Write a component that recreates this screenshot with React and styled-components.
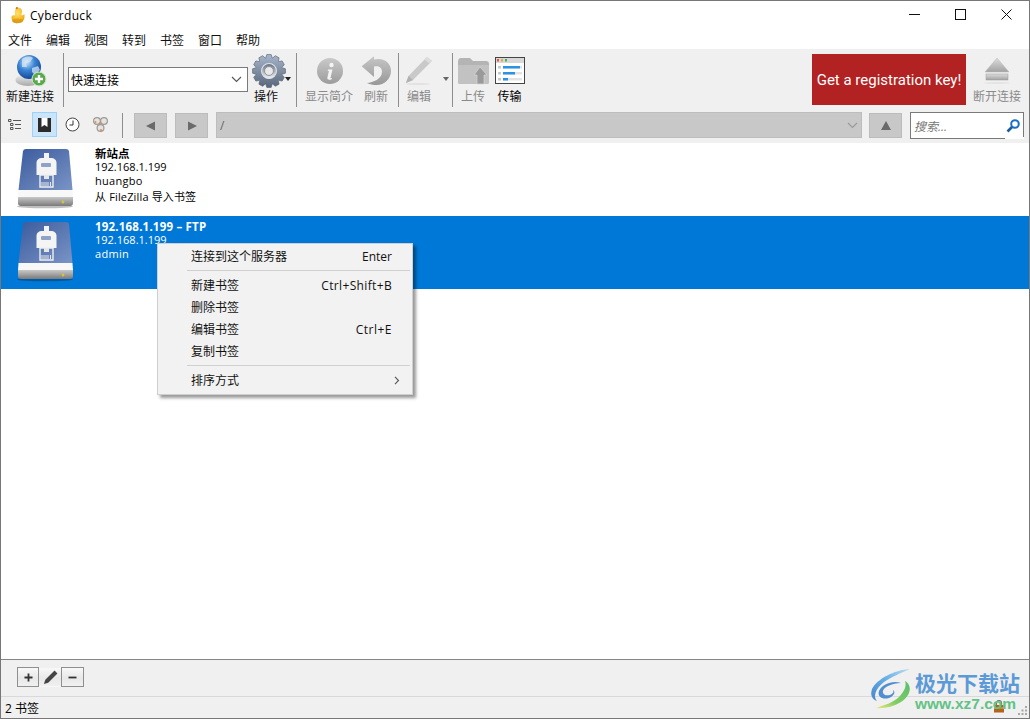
import React from 'react';
import styled, { createGlobalStyle } from 'styled-components';

const CJK = '"Noto Sans CJK SC"';
const Global = createGlobalStyle`
  html, body { margin: 0; padding: 0; background: #fff; }
  * { box-sizing: border-box; }
  body { font-family: "Open Sans", ${CJK}, sans-serif; font-size: 12px; color: #000; }
`;
const Window = styled.div`
  position: relative; width: 1030px; height: 719px; border: 1px solid #777; overflow: hidden;
  display: flex; flex-direction: column; background: #f0f0f0;
`;
const TitleBar = styled.div`
  height: 27px; flex: none; background: #fff; display: flex; align-items: center; padding-left: 9px;
`;
const TitleText = styled.span` font-size: 12px; letter-spacing: .3px; flex: 1; padding-top: 2px; margin-left: 4px; `;
const WinBtn = styled.div` width: 46px; height: 27px; display: flex; align-items: center; justify-content: center; `;
const MenuBar = styled.div` height: 21px; flex: none; background: #fff; display: flex; align-items: center; padding-top: 4px; `;
const MenuItem = styled.span` padding: 0 7px; font-size: 12px; line-height: 17px; color: #111; `;
const Toolbar = styled.div` height: 63px; flex: none; display: flex; align-items: flex-start; padding: 0 7px 0 4px; `;
const ToolBtn = styled.div`
  width: ${p => p.$w}px; margin-left: ${p => p.$ml || 0}px; height: 55px; margin-top: 3px; display: flex; flex-direction: column;
  align-items: center; justify-content: flex-start; font-size: 12px; color: ${p => p.$off ? '#8a8a8a' : '#111'}; flex: none; position: relative;
`;
const ToolIcon = styled.div` height: 37px; display: flex; align-items: center; justify-content: center; margin-left: ${p => p.$nudge || 0}px; `;
const ToolLabel = styled.span` line-height: 16px; white-space: nowrap; color: ${p => p.$strong ? '#000' : 'inherit'}; `;
const Divider = styled.div`
  width: 1px; height: ${p => p.$h || 54}px; background: #8e8e8e; margin-left: ${p => p.$ml || 0}px; margin-top: ${p => p.$mt ?? 4}px; flex: none;
`;
const QuickCombo = styled.div`
  width: 180px; height: 25px; margin: 18px 0 0 4px; background: #fff; border: 1px solid #7a7a7a; flex: none;
  display: flex; align-items: center; justify-content: space-between; padding: 0 5px 0 2px; font-size: 12px;
`;
const DropCaret = styled.div`
  position: absolute; right: ${p => p.$r}px; top: ${p => p.$t}px; width: 0; height: 0;
  border-left: 3.5px solid transparent; border-right: 3.5px solid transparent; border-top: 4px solid ${p => p.$c};
`;
const RegBanner = styled.div`
  width: 154px; height: 51px; margin: 5px 0 0 auto; background: #b22222; color: #fff; font: 15px Roboto, sans-serif; flex: none;
  display: flex; align-items: center; justify-content: center; white-space: nowrap;
`;
const NavBar = styled.div` height: 31px; flex: none; display: flex; align-items: flex-start; `;
const ViewBtn = styled.div`
  width: 25px; height: 25px; margin-left: ${p => p.$ml || 0}px; display: flex; align-items: center; justify-content: center; flex: none;
  background: ${p => p.$active ? '#cce4f7' : 'transparent'}; border: 1px solid ${p => p.$active ? '#99d1ff' : 'transparent'};
`;
const NavSquare = styled.div`
  width: 33px; height: 25px; margin-left: ${p => p.$ml}px; margin-top: 1px; flex: none; background: #c8c8c8; border: 1px solid #bcbcbc;
  display: flex; align-items: center; justify-content: center;
`;
const PathCombo = styled.div`
  width: 646px; height: 26px; margin-left: 8px; flex: none; background: #c8c8c8; border: 1px solid #bdbdbd;
  display: flex; align-items: center; justify-content: space-between; padding: 0 3px 0 3px; color: #666; font-size: 12px;
`;
const SearchBox = styled.div`
  width: 114px; height: 27px; margin-left: 8px; flex: none; background: #fff; border: 1px solid #7a7a7a;
  display: flex; align-items: center; justify-content: space-between; padding: 0 2px 0 3px; color: #777; font-style: italic; font-size: 12px; position: relative;
`;
const SearchNotch = styled.div` position: absolute; right: -1px; bottom: -1px; width: 19px; height: 2px; background: #fff; `;
const List = styled.div` flex: 1; background: #fff; display: flex; flex-direction: column; `;
const Row = styled.div`
  height: 73px; flex: none; display: flex; background: ${p => p.$sel ? '#0078d7' : '#fff'}; color: ${p => p.$sel ? '#fff' : '#000'};
  padding: 3px 0 0 15px;
`;
const RowText = styled.div` margin: 1px 0 0 19px; display: flex; flex-direction: column; font-size: 11px; `;
const RowLine = styled.div` line-height: ${p => p.$h || 14}px; white-space: nowrap; letter-spacing: ${p => p.$s || 0}px; `;
const RowTitle = styled.div` line-height: 13px; white-space: nowrap; font-weight: 700; font-size: 11.5px; letter-spacing: ${p => p.$s || 0}px; `;
const Footer = styled.div`
  height: 37px; flex: none; border-top: 1px solid #858585; display: flex; align-items: flex-start; padding: 7px 0 0 16px;
`;
const SmallBtn = styled.div`
  width: ${p => p.$w}px; height: 20px; background: linear-gradient(#f8f8f8, #e8e8e8 55%, #f0f0f0); border: 1px solid ${p => p.$plain ? 'transparent' : '#8f8f8f'};
  display: flex; align-items: center; justify-content: center; flex: none;
`;
const Status = styled.div`
  height: 22px; flex: none; border-top: 1px solid #d9d9d9; display: flex; align-items: center; padding-left: 4px; font-size: 12px; position: relative;
`;
const ContextMenu = styled.div`
  position: absolute; left: 156px; top: 242px; width: 256px; height: 152px; background: #f2f2f2; border: 1px solid #cfcfcf;
  box-shadow: 3px 3px 3px rgba(0,0,0,.4); padding: 1px; font-size: 12px; color: #111;
`;
const CtxItem = styled.div`
  height: 22px; display: flex; justify-content: space-between; align-items: center; padding: 0 19px 0 32px;
`;
const CtxKey = styled.span` letter-spacing: ${p => p.$s || 0}px; `;
const CtxArrow = styled.svg` margin-right: -8px; `;
const CtxSep = styled.div` height: 1px; background: #d0d0d0; margin: 3px 1px 3px 28px; `;
const Watermark = styled.div`
  position: absolute; left: 867px; top: 666px; display: flex; pointer-events: none;
`;
const WmText = styled.div` display: flex; flex-direction: column; margin-top: 2px; `;
const WmTitle = styled.div` font: 700 21px ${CJK}, sans-serif; line-height: 26px; color: #5b9ad6; `;
const WmUrl = styled.div` font: 700 15.5px "Liberation Sans", sans-serif; line-height: 18px; color: #63c285; `;
const StatusIcon = styled.div` position: absolute; right: ${p => p.$r}px; top: ${p => p.$t}px; display: flex; `;

const Duck = () => (
  <svg width="16" height="18" viewBox="0 0 16 18">
    <defs><radialGradient id="dk" cx=".45" cy=".35" r=".75"><stop offset="0" stopColor="#ffe06a" /><stop offset=".7" stopColor="#f5b51d" /><stop offset="1" stopColor="#c98a10" /></radialGradient></defs>
    <path d="M1.500 11c0-1.500 1.500-2 3.500-1.800L5 7.500C4.200 3.500 7 1.500 9 1.800c3 .4 3.800 3.400 2.600 6l-.3 1.400c1.300.4 2.100-.2 3-1.200.8 3.800-.2 9-6.600 9C3.500 18 1.500 14.500 1.500 11z" fill="url(#dk)" />
    <path d="M5.500 3.200L6.200 1 8 1.200 7.500 3z" fill="#d9781c" />
    <ellipse cx="7.500" cy="14.800" rx="5.500" ry="2.400" fill="#d6950f" opacity=".65" />
  </svg>
);
const Globe = () => (
  <svg width="46" height="36" viewBox="0 0 46 36">
    <defs>
      <radialGradient id="gl" cx=".4" cy=".3" r=".75"><stop offset="0" stopColor="#cfe6fa" /><stop offset=".45" stopColor="#3b85d4" /><stop offset="1" stopColor="#0f3f93" /></radialGradient>
      <linearGradient id="gd" x1="0" y1="0" x2="0" y2="1"><stop offset="0" stopColor="#f1f1f1" /><stop offset="1" stopColor="#a8a8a8" /></linearGradient>
    </defs>
    <ellipse cx="21" cy="27" rx="12.500" ry="6" fill="url(#gd)" />
    <circle cx="22" cy="14" r="12" fill="url(#gl)" />
    <path d="M15 6c4-3 8-3 11-1l-3 4-4 1 1 4-5 0zM25 15l6-2 2 4-5 5-3-3z" fill="#dbe9f6" opacity=".7" />
    <circle cx="32" cy="26" r="7" fill="#5aa94c" stroke="#d9ecd3" strokeWidth="1" />
    <path d="M32 22v8M28 26h8" stroke="#fff" strokeWidth="2.400" />
  </svg>
);
const gearPath = (() => {
  const n = 12, cx = 16, cy = 16; let d = '';
  for (let i = 0; i < n; i++) {
    const a = (i / n) * Math.PI * 2, s = Math.PI / n;
    const pts = [[a - s * .95, 12.6], [a - s * .5, 15.6], [a + s * .5, 15.6], [a + s * .95, 12.6]];
    pts.forEach(([t, r], k) => { d += `${i === 0 && k === 0 ? 'M' : 'L'}${(cx + r * Math.cos(t)).toFixed(2)} ${(cy + r * Math.sin(t)).toFixed(2)}`; });
  }
  return d + 'Z';
})();
const Gear = () => (
  <svg width="34" height="34" viewBox="0 0 32 32">
    <defs>
      <linearGradient id="gg" x1="0" y1="0" x2="0" y2="1"><stop offset="0" stopColor="#a9b7cc" /><stop offset="1" stopColor="#58667c" /></linearGradient>
      <linearGradient id="gc" x1="0" y1="0" x2="0" y2="1"><stop offset="0" stopColor="#666e7c" /><stop offset="1" stopColor="#f2f2f2" /></linearGradient>
    </defs>
    <path d={gearPath} fill="url(#gg)" stroke="#55606f" strokeWidth=".6" />
    <circle cx="16" cy="16" r="7" fill="url(#gc)" stroke="#dfe4ea" strokeWidth="1" />
    <circle cx="16" cy="16" r="4.200" fill="#e8e8e8" stroke="#7d8694" strokeWidth=".8" />
  </svg>
);
const Info = () => (
  <svg width="28" height="28" viewBox="0 0 28 28">
    <defs><linearGradient id="ig" x1="0" y1="0" x2="0" y2="1"><stop offset="0" stopColor="#c9c9c9" /><stop offset="1" stopColor="#9c9c9c" /></linearGradient></defs>
    <circle cx="14" cy="14" r="13" fill="url(#ig)" />
    <circle cx="15.500" cy="8" r="2.200" fill="#f4f4f4" />
    <path d="M12 12.500h4.500l-2 8.200c-.1.600.4.800 1.600.2l-.3 1.300c-2.400 1.100-5 .9-4.400-1.600l1.500-6.600-1.200-.2z" fill="#f4f4f4" />
  </svg>
);
const Refresh = () => (
  <svg width="32" height="32" viewBox="0 0 32 32">
    <defs><linearGradient id="rf" x1="0" y1="0" x2="0" y2="1"><stop offset="0" stopColor="#c6c6c6" /><stop offset="1" stopColor="#989898" /></linearGradient></defs>
    <path d="M1.700 11.300L14 1.300V4.500C24 2 31 8 31 16C31 24 24 30 17 30C13 30 10 29.500 7 28C13 27.500 22 24 22 16.500C22 12 18 10.500 14 11.500V22Z" fill="url(#rf)" />
  </svg>
);
const Pencil = () => (
  <svg width="28" height="30" viewBox="0 0 28 30">
    <path d="M22 1 L27 5 L8 24 L1 27 L3.500 20Z" fill="#c9c9c9" />
    <path d="M22 1 L27 5 L24.500 7.500 L19.500 3.500Z" fill="#dcdcdc" />
    <path d="M3.500 20 L8 24 L1 27Z" fill="#b2b2b2" />
    <ellipse cx="13" cy="28" rx="12" ry="1" fill="#e2e2e2" />
  </svg>
);
const Upload = () => (
  <svg width="33" height="30" viewBox="0 0 33 30">
    <path d="M1 6 Q1 2 4 2 H13 L16 5 H29 Q32 5 32 8 V26 Q32 28 30 28 H3 Q1 28 1 26Z" fill="#b4b4b4" />
    <path d="M1 9 H32 V26 Q32 28 30 28 H3 Q1 28 1 26Z" fill="#c2c2c2" />
    <path d="M23 11 L30 19 H27 V28 H20 V19 H17Z" fill="#9a9a9a" stroke="#d5d5d5" strokeWidth=".7" />
  </svg>
);
const Transfer = () => (
  <svg width="30" height="27" viewBox="0 0 30 27">
    <rect x=".5" y=".5" width="29" height="26" fill="#fff" stroke="#444" />
    <rect x="1" y="1" width="28" height="5" fill="#d8d8d8" />
    <rect x="2" y="2" width="2" height="2.500" fill="#e95050" /><rect x="6" y="2" width="2" height="2.500" fill="#f0a33a" /><rect x="10" y="2" width="2" height="2.500" fill="#3cb65a" />
    {[[9, 17], [15, 12], [21, 5]].map(([y, w]) => (
      <g key={y}><rect x="3" y={y} width="3" height="2.500" fill="#c8c8c8" /><rect x="8" y={y} width="19" height="2.500" fill="#e3e3e3" /><rect x="8" y={y} width={w} height="2.500" fill="#2a93e6" /></g>
    ))}
  </svg>
);
const Eject = () => (
  <svg width="28" height="30" viewBox="0 0 28 30">
    <defs><linearGradient id="ej" x1="0" y1="0" x2="0" y2="1"><stop offset="0" stopColor="#dcdcdc" /><stop offset="1" stopColor="#a2a2a2" /></linearGradient></defs>
    <path d="M14 2 L26 16 H2Z" fill="url(#ej)" stroke="#bbb" strokeWidth=".5" />
    <rect x="3" y="18" width="22" height="6" fill="url(#ej)" stroke="#9a9a9a" strokeWidth=".5" />
    <ellipse cx="14" cy="27" rx="13" ry="1" fill="#e4e4e4" />
  </svg>
);
const Disk = ({ id }) => (
  <svg width="60" height="64" viewBox="0 0 60 64">
    <defs>
      <linearGradient id={id + 'b'} x1="0" y1="0" x2="1" y2="1"><stop offset="0" stopColor="#3b5b9d" /><stop offset="1" stopColor="#7a94c6" /></linearGradient>
      <linearGradient id={id + 'g'} x1="0" y1="0" x2="0" y2="1"><stop offset="0" stopColor="#c8c8c8" /><stop offset="1" stopColor="#7a7a7a" /></linearGradient>
    </defs>
    <ellipse cx="29" cy="60.500" rx="28" ry="1.800" fill="#000" opacity=".25" />
    <path d="M7 5 Q7.500 3 10 3 H50 Q52.500 3 53 5 L56.500 44 H2.500Z" fill={`url(#${id}b)`} />
    <path d="M2.500 44 H56.500 L57 51 H2Z" fill="#f8f8f8" />
    <path d="M2 51 H57 V57 Q57 60 54 60 H5 Q2 60 2 57Z" fill={`url(#${id}g)`} />
    <circle cx="47" cy="56" r="1.400" fill="#d8c23a" />
    <path d="M27.500 7 H32.500 V12 H34C38 12 40 14 40 17 V29 H20 V17C20 14 22 12 26 12 H27.500Z" fill="#f4f4f4" transform="translate(0.500 0)" />
    <rect x="25" y="17" width="10" height="4" rx="1" fill="#8fa3c9" />
    <path d="M24 29h13v12H24z" fill="none" stroke="#f0f0f0" strokeWidth="1.400" />
    <rect x="28" y="29" width="5" height="4" fill="#e6e6e6" />
    <path d="M26 36v4M28 36v4M30 36v4M32 36v4M34.500 36v4" stroke="#e8e8e8" strokeWidth="1" />
  </svg>
);
const Chevron = ({ c = '#555' }) => (
  <svg width="11" height="7" viewBox="0 0 11 7"><path d="M1 1l4.500 4.500L10 1" fill="none" stroke={c} strokeWidth="1.100" /></svg>
);
const Tri = ({ d }) => (
  <svg width="12" height="12" viewBox="0 0 12 12" fill="#6a6a6a"><path d={d} /></svg>
);

export default function App() {
  return (
    <>
      <Global />
      <Window>
        <TitleBar>
          <Duck />
          <TitleText>Cyberduck</TitleText>
          <WinBtn><svg width="11" height="11" viewBox="0 0 11 11"><path d="M0 5.500h11" stroke="#111" /></svg></WinBtn>
          <WinBtn><svg width="11" height="11" viewBox="0 0 11 11"><rect x=".5" y=".5" width="10" height="10" fill="none" stroke="#111" /></svg></WinBtn>
          <WinBtn><svg width="11" height="11" viewBox="0 0 11 11"><path d="M.5.5l10 10M10.500.5l-10 10" stroke="#111" /></svg></WinBtn>
        </TitleBar>
        <MenuBar>
          {['文件', '编辑', '视图', '转到', '书签', '窗口', '帮助'].map(m => <MenuItem key={m}>{m}</MenuItem>)}
        </MenuBar>
        <Toolbar>
          <ToolBtn $w={50}><ToolIcon><Globe /></ToolIcon><ToolLabel>新建连接</ToolLabel></ToolBtn>
          <Divider $ml={8} />
          <QuickCombo>快速连接<Chevron /></QuickCombo>
          <ToolBtn $w={34} $ml={1}>
            <ToolIcon $nudge={5}><Gear /></ToolIcon><ToolLabel>操作</ToolLabel>
            <DropCaret $r={-8} $t={25} $c="#222" />
          </ToolBtn>
          <Divider $ml={13} />
          <ToolBtn $w={52} $ml={6} $off><ToolIcon $nudge={2}><Info /></ToolIcon><ToolLabel>显示简介</ToolLabel></ToolBtn>
          <ToolBtn $w={34} $ml={4} $off><ToolIcon><Refresh /></ToolIcon><ToolLabel>刷新</ToolLabel></ToolBtn>
          <Divider $ml={5} />
          <ToolBtn $w={38} $ml={1} $off><ToolIcon><Pencil /></ToolIcon><ToolLabel>编辑</ToolLabel></ToolBtn>
          <ToolBtn $w={11} $off><DropCaret $r={0} $t={25} $c="#666" /></ToolBtn>
          <Divider $ml={3} />
          <ToolBtn $w={34} $ml={3} $off><ToolIcon><Upload /></ToolIcon><ToolLabel>上传</ToolLabel></ToolBtn>
          <ToolBtn $w={35} $ml={2}><ToolIcon><Transfer /></ToolIcon><ToolLabel $strong>传输</ToolLabel></ToolBtn>
          <RegBanner>Get a registration key!</RegBanner>
          <ToolBtn $w={50} $ml={6} $off><ToolIcon><Eject /></ToolIcon><ToolLabel>断开连接</ToolLabel></ToolBtn>
        </Toolbar>
        <NavBar>
          <ViewBtn $ml={1}>
            <svg width="13" height="11" viewBox="0 0 13 11" fill="none" stroke="#444"><path d="M.5.5h2.500v2H.5zM2.500 4.500h2.500v2H2.500zM2.500 8.500h2.500v2H2.500zM5 1.500h8M7 5.500h6M7 9.500h6" strokeWidth=".9" /></svg>
          </ViewBtn>
          <ViewBtn $ml={5} $active>
            <svg width="13" height="14" viewBox="0 0 13 14"><path d="M0 0h13v14H0z" fill="#2b2b2b" /><path d="M3.500 0h6v9L6.500 7 3.500 9z" fill="#fff" /></svg>
          </ViewBtn>
          <ViewBtn $ml={3}>
            <svg width="15" height="15" viewBox="0 0 15 15"><circle cx="7.500" cy="7.500" r="6.500" fill="#fff" stroke="#444" /><path d="M8 3.500v4.500H4.500" fill="none" stroke="#333" /></svg>
          </ViewBtn>
          <ViewBtn $ml={3}>
            <svg width="17" height="17" viewBox="0 0 17 17" fill="#e4e4e4" stroke="#a09a94" strokeWidth="1.200"><circle cx="5" cy="5" r="3.400" /><circle cx="12" cy="5" r="3.400" /><circle cx="8.500" cy="12" r="3.400" /><circle cx="3.500" cy="6" r="1" fill="#e58a45" stroke="none" /><circle cx="8.500" cy="7" r="1" fill="#e58a45" stroke="none" /><circle cx="9" cy="14" r="1" fill="#e58a45" stroke="none" /></svg>
          </ViewBtn>
          <Divider $ml={9} $h={25} $mt={1} />
          <NavSquare $ml={11}><Tri d="M1 6 L10 1.500 V10.500Z" /></NavSquare>
          <NavSquare $ml={8}><Tri d="M11 6 L2 1.500 V10.500Z" /></NavSquare>
          <PathCombo>/<Chevron c="#9a9a9a" /></PathCombo>
          <NavSquare $ml={7}><Tri d="M6 1 L11 10 H1Z" /></NavSquare>
          <SearchBox>
            搜索...
            <svg width="15" height="15" viewBox="0 0 15 15"><circle cx="9" cy="6" r="3.800" fill="none" stroke="#1b6fc2" strokeWidth="2" /><path d="M6 9l-4.500 4.500" stroke="#1b5c9f" strokeWidth="2.600" /></svg>
            <SearchNotch />
          </SearchBox>
        </NavBar>
        <List>
          <Row>
            <Disk id="d1" />
            <RowText>
              <RowTitle>新站点</RowTitle>
              <RowLine>192.168.1.199</RowLine>
              <RowLine $s={.3}>huangbo</RowLine>
              <RowLine $h={17} $s={.15}>从 FileZilla 导入书签</RowLine>
            </RowText>
          </Row>
          <Row $sel>
            <Disk id="d2" />
            <RowText>
              <RowTitle $s={.2}>192.168.1.199 – FTP</RowTitle>
              <RowLine>192.168.1.199</RowLine>
              <RowLine $s={.3}>admin</RowLine>
            </RowText>
          </Row>
        </List>
        <Footer>
          <SmallBtn $w={22}><svg width="11" height="11" viewBox="0 0 11 11"><path d="M5.500 1.500v8M1.500 5.500h8" stroke="#333" strokeWidth="1.800" /></svg></SmallBtn>
          <SmallBtn $w={22} $plain><svg width="15" height="15" viewBox="0 0 13 13"><path d="M10 .5l2.500 2.500-8 8L.8 12.200 2 8.500z" fill="#444" /></svg></SmallBtn>
          <SmallBtn $w={23}><svg width="11" height="11" viewBox="0 0 11 11"><path d="M1.500 5.500h8" stroke="#333" strokeWidth="1.800" /></svg></SmallBtn>
        </Footer>
        <Status>
          2 书签
          <StatusIcon $r={24} $t={3}>
            <svg width="12" height="13" viewBox="0 0 12 13"><path d="M3.500 5V3a2.500 2.500 0 015 0v2" fill="none" stroke="#777" strokeWidth="1.200" /><rect x="1" y="5" width="10" height="7.500" fill="#b4621c" /><path d="M1 8h10" stroke="#e0b060" /></svg>
          </StatusIcon>
          <StatusIcon $r={1} $t={9}>
            <svg width="10" height="10" viewBox="0 0 10 10" fill="#a8a8a8"><rect x="7" y="0" width="2" height="2" /><rect x="3.500" y="3.500" width="2" height="2" /><rect x="7" y="3.500" width="2" height="2" /><rect x="0" y="7" width="2" height="2" /><rect x="3.500" y="7" width="2" height="2" /><rect x="7" y="7" width="2" height="2" /></svg>
          </StatusIcon>
        </Status>
        <ContextMenu>
          <CtxItem><span>连接到这个服务器</span><CtxKey>Enter</CtxKey></CtxItem>
          <CtxSep />
          <CtxItem><span>新建书签</span><CtxKey $s={.35}>Ctrl+Shift+B</CtxKey></CtxItem>
          <CtxItem><span>删除书签</span></CtxItem>
          <CtxItem><span>编辑书签</span><CtxKey $s={.5}>Ctrl+E</CtxKey></CtxItem>
          <CtxItem><span>复制书签</span></CtxItem>
          <CtxSep />
          <CtxItem><span>排序方式</span><CtxArrow width="6" height="9" viewBox="0 0 6 9"><path d="M1 .8l3.500 3.700L1 8.200" fill="none" stroke="#555" strokeWidth="1.100" /></CtxArrow></CtxItem>
        </ContextMenu>
        <Watermark>
          <svg width="47" height="44" viewBox="0 0 47 44">
            <defs>
              <linearGradient id="wmb" x1="1" y1="0" x2="0" y2="1"><stop offset="0" stopColor="#b9dcf3" /><stop offset=".5" stopColor="#62ace3" /><stop offset="1" stopColor="#4c85c9" /></linearGradient>
              <linearGradient id="wmg" x1="1" y1="0" x2="0" y2="1"><stop offset="0" stopColor="#58bf6d" /><stop offset=".6" stopColor="#7fcc63" /><stop offset="1" stopColor="#efe77e" /></linearGradient>
            </defs>
            <path d="M42 2C26 3 9 12 4 22C2 28 4 32 9 34C5 30 7 22 16 15C23 10 33 6 42 2Z" fill="url(#wmb)" />
            <path d="M37 14C44 18 44 28 33 35C25 40 15 42 8 41C16 38 25 36 31 30C36 25 39 19 37 14Z" fill="url(#wmg)" />
            <path d="M33 16C25 13 14 17 11 24C9 30 15 33 21 31C26 29 28 25 25 23C27 27 21 29 17 28C13 26 15 21 20 19C24 17 29 16 33 16Z" fill="#4f8fd0" />
          </svg>
          <WmText>
            <WmTitle>极光下载站</WmTitle>
            <WmUrl>www.xz7.com</WmUrl>
          </WmText>
        </Watermark>
      </Window>
    </>
  );
}
